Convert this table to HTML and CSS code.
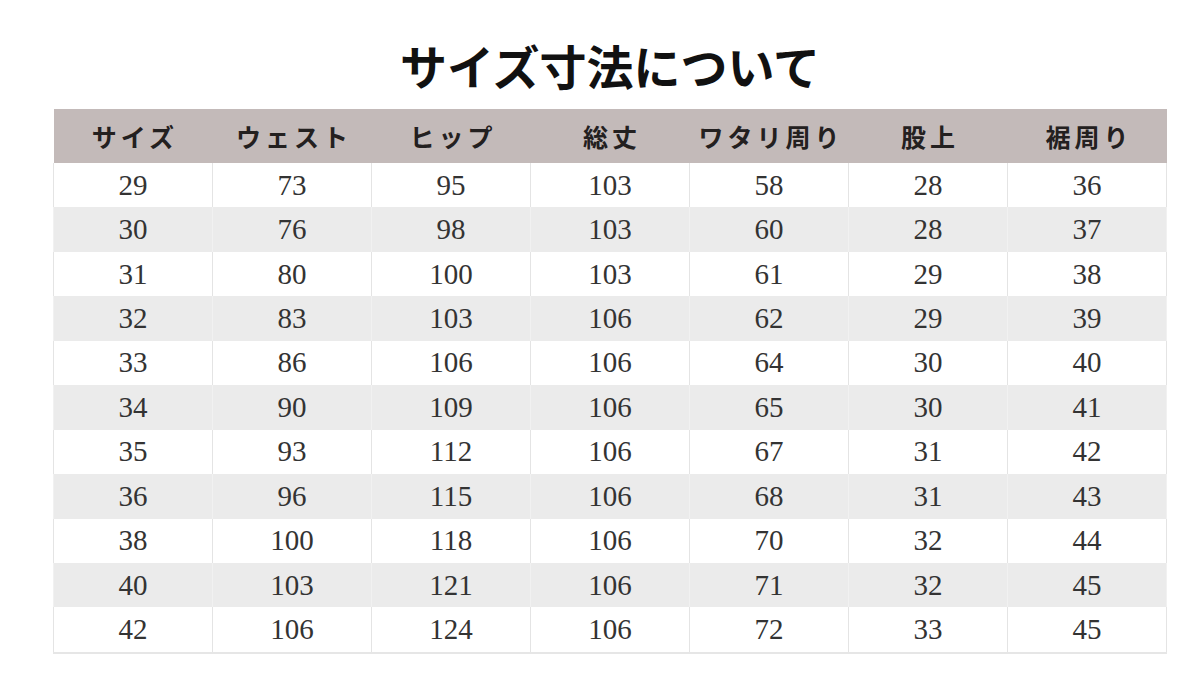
FILE: index.html
```html
<!DOCTYPE html>
<html lang="ja">
<head>
<meta charset="utf-8">
<title>サイズ寸法について</title>
<link rel="stylesheet" href="styles.css">
</head>
<body>
<div class="page">
  <h1 class="title">サイズ寸法について</h1>
  <table class="size-table">
    <thead>
      <tr>
        <th>サイズ</th><th>ウェスト</th><th>ヒップ</th><th>総丈</th><th>ワタリ周り</th><th>股上</th><th>裾周り</th>
      </tr>
    </thead>
    <tbody>
      <tr><td>29</td><td>73</td><td>95</td><td>103</td><td>58</td><td>28</td><td>36</td></tr>
      <tr><td>30</td><td>76</td><td>98</td><td>103</td><td>60</td><td>28</td><td>37</td></tr>
      <tr><td>31</td><td>80</td><td>100</td><td>103</td><td>61</td><td>29</td><td>38</td></tr>
      <tr><td>32</td><td>83</td><td>103</td><td>106</td><td>62</td><td>29</td><td>39</td></tr>
      <tr><td>33</td><td>86</td><td>106</td><td>106</td><td>64</td><td>30</td><td>40</td></tr>
      <tr><td>34</td><td>90</td><td>109</td><td>106</td><td>65</td><td>30</td><td>41</td></tr>
      <tr><td>35</td><td>93</td><td>112</td><td>106</td><td>67</td><td>31</td><td>42</td></tr>
      <tr><td>36</td><td>96</td><td>115</td><td>106</td><td>68</td><td>31</td><td>43</td></tr>
      <tr><td>38</td><td>100</td><td>118</td><td>106</td><td>70</td><td>32</td><td>44</td></tr>
      <tr><td>40</td><td>103</td><td>121</td><td>106</td><td>71</td><td>32</td><td>45</td></tr>
      <tr><td>42</td><td>106</td><td>124</td><td>106</td><td>72</td><td>33</td><td>45</td></tr>
    </tbody>
  </table>
</div>
</body>
</html>
```
FILE: styles.css
```css
html, body {
  margin: 0;
  padding: 0;
  background: #ffffff;
}

.page {
  width: 1114px;
  margin-left: 53px;
  padding-top: 41px;
  display: flex;
  flex-direction: column;
  gap: 20px;
}

.title {
  margin: 0;
  height: 48px;
  font-family: "Noto Sans CJK JP", "Noto Sans", sans-serif;
  font-size: 47px;
  line-height: 48px;
  font-weight: 700;
  color: #111111;
  text-align: center;
}

.size-table {
  width: 1114px;
  border-collapse: collapse;
  table-layout: fixed;
}

.size-table th {
  height: 54px;
  padding: 0 0 0 4px;
  background: #c3bab9;
  font-family: "Noto Sans CJK JP", sans-serif;
  font-size: 25px;
  font-weight: 700;
  letter-spacing: 4px;
  white-space: nowrap;
  color: #232020;
  text-align: center;
  vertical-align: middle;
}

.size-table td {
  height: 44.45px;
  padding: 0;
  font-family: "Liberation Serif", serif;
  font-size: 29px;
  color: #333333;
  text-align: center;
  vertical-align: middle;
  border-left: 1px solid #e4e4e4;
  border-right: 1px solid #e4e4e4;
  line-height: 1;
}

.size-table tbody tr {
  background: #ffffff;
}

.size-table tbody tr:nth-child(even) {
  background: #ebebeb;
}

.size-table tbody tr:nth-child(even) td {
  border-left-color: #f1f1f1;
  border-right-color: #f1f1f1;
}

.size-table tbody tr:last-child td {
  border-bottom: 2px solid #e6e6e6;
}
```
